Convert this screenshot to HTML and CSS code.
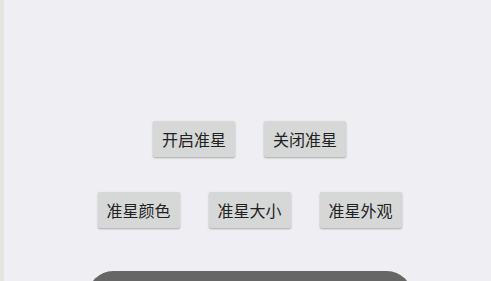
FILE: index.html
```html
<!DOCTYPE html>
<html lang="zh">
<head>
  <meta charset="UTF-8">
  <meta name="viewport" content="width=device-width, initial-scale=1.0">
  <title>准星</title>
  <link rel="stylesheet" href="styles.css">
</head>
<body>
  <div class="edge"></div>
  <main>
    <div class="row row-top">
      <button>开启准星</button>
      <button>关闭准星</button>
    </div>
    <div class="row">
      <button>准星颜色</button>
      <button>准星大小</button>
      <button>准星外观</button>
    </div>
    <div class="bar"></div>
  </main>
</body>
</html>
```

FILE: styles.css
```css
* {
  box-sizing: border-box;
}
html,
body {
  margin: 0;
  height: 100%;
  overflow: hidden;
}
body {
  display: flex;
  background: #efeef3;
  font-family: "Noto Sans CJK SC", "Noto Sans", sans-serif;
}
.edge {
  width: 4px;
  background: #e4e4e1;
  flex-shrink: 0;
}
main {
  flex: 1;
  display: flex;
  flex-direction: column;
  align-items: center;
  padding-left: 4px;
  padding-top: 121px;
  gap: 35px;
}
.row {
  display: flex;
  gap: 29px;
}
.row button {
  width: 82px;
  height: 36px;
  padding: 0;
  border: none;
  border-radius: 2px;
  background: #d6d7d7;
  color: #222;
  font-family: inherit;
  font-size: 16px;
  box-shadow: 0 1px 2px rgba(0, 0, 0, 0.3);
}
.bar {
  margin-top: 8px;
  width: 324px;
  height: 50px;
  border-radius: 25px;
  background: #666666;
  flex-shrink: 0;
}
```
